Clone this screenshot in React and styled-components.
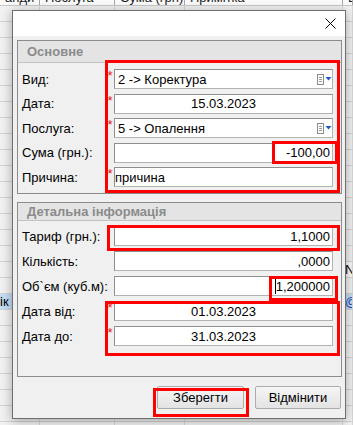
import React from 'react';
import styled, { createGlobalStyle } from 'styled-components';

const Global = createGlobalStyle`
  html, body { margin: 0; padding: 0; }
  body {
    width: 353px; height: 425px; overflow: hidden; background: #ececec;
    font-family: "Liberation Sans", Arial, sans-serif;
  }
  * { box-sizing: border-box; }
`;

const Page = styled.div`
  position: relative;
  width: 353px;
  height: 425px;
  overflow: hidden;
  background: #ececec;
`;

const cols = '40px 75px 70px 158px 1fr';

const Table = styled.div`
  display: flex;
  flex-direction: column;
`;

const HeadRow = styled.div`
  display: grid;
  grid-template-columns: ${cols};
  height: 6px;
  overflow: hidden;
  background: #fbfbfb;
  border-bottom: 1px solid #c9c9c9;
`;

const HeadCell = styled.div`
  display: flex;
  align-items: flex-end;
  padding-left: 5px;
  border-right: 1px solid #a9a9a9;
  font-size: 13px;
  line-height: 13px;
  color: #1e1e1e;
  white-space: nowrap;
  overflow: hidden;
  & > span { margin-bottom: 1px; }
`;

const Row = styled.div`
  display: grid;
  grid-template-columns: ${cols};
  height: 16px;
  border-bottom: 1px solid #d3d3d3;
  background: ${p => (p.$selected ? '#c4def5' : '#f2f2f2')};
`;

const Cell = styled.div`
  border-right: 1px solid #d8d8d8;
  font-size: 13px;
  line-height: 15px;
  padding-left: ${p => p.$pad || 0}px;
  white-space: nowrap;
  overflow: hidden;
  color: ${p => (p.$link ? '#1747b8' : '#000')};
  background: ${p => (p.$boxed ? '#fafafa' : 'transparent')};
`;

const Dialog = styled.div`
  position: absolute;
  left: 12px;
  top: 10px;
  width: 334px;
  height: 409px;
  border: 1px solid #6f6f6f;
  background: #f0f0f0;
  box-shadow: 0 2px 11px rgba(0, 0, 0, 0.32);
  display: flex;
  flex-direction: column;
`;

const TitleBar = styled.div`
  height: 25px;
  background: #ffffff;
  display: flex;
  justify-content: flex-end;
  align-items: center;
  padding-right: 9px;
`;

const Body = styled.div`
  flex: 1;
  display: flex;
  flex-direction: column;
  padding: 4px 3px 4px 4px;
`;

const Group = styled.div`
  width: 325px;
  border: 1px solid #8c8c8c;
  background: #f0f0f0;
  margin-bottom: ${p => p.$mb || 0}px;
`;

const GroupHeader = styled.div`
  height: ${p => p.$h}px;
  background: #e4e4e4;
  border-bottom: 1px solid #c2c2c2;
  display: flex;
  align-items: center;
  padding-left: 9px;
  font-size: 13px;
  font-weight: bold;
  color: #8b8b8b;
`;

const Fields = styled.div`
  display: grid;
  grid-template-columns: 84px 8px 219px;
  grid-auto-rows: 20px;
  row-gap: ${p => p.$gap}px;
  padding: ${p => p.$pt}px 7px ${p => p.$pb}px 4px;
  align-items: center;
`;

const Label = styled.div`
  font-size: 13px;
  color: #000;
  white-space: nowrap;
`;

const Star = styled.div`
  align-self: start;
  font-size: 13px;
  line-height: 13px;
  color: #e8141a;
  text-align: center;
`;

const Input = styled.div`
  height: 20px;
  background: #fff;
  border: 1px solid #b3b3b3;
  border-top-color: #8f8f8f;
  border-left-color: #8f8f8f;
  display: flex;
  align-items: center;
  justify-content: ${p => p.$justify || 'flex-start'};
  padding: 0 ${p => p.$pr ?? 2}px 0 ${p => p.$pl ?? 2}px;
  font-size: 13px;
  color: #000;
  white-space: nowrap;
  overflow: hidden;
`;

const Caret = styled.span`
  display: inline-block;
  width: 1px;
  height: 15px;
  background: #000;
  margin-right: 0;
`;

const Buttons = styled.div`
  display: flex;
  justify-content: flex-end;
  gap: 11px;
  margin-top: 9px;
  padding-right: 1px;
`;

const Button = styled.div`
  width: ${p => p.$w}px;
  height: 23px;
  border: 1px solid #acacac;
  border-radius: 2px;
  background: linear-gradient(#f5f5f5, #e3e3e3);
  display: flex;
  align-items: center;
  justify-content: center;
  font-size: 13px;
  color: #000;
`;

const Mark = styled.div`
  position: absolute;
  left: ${p => p.$x}px;
  top: ${p => p.$y}px;
  width: ${p => p.$w}px;
  height: ${p => p.$h}px;
  border: 3px solid #ff0000;
  pointer-events: none;
`;

const ComboIcon = () => (
  <svg width="16" height="11" viewBox="0 0 16 11">
    <rect x="1.5" y="0.5" width="6" height="10" fill="#fff" stroke="#8c8c8c" />
    <line x1="3" y1="3.5" x2="6" y2="3.5" stroke="#9a9a9a" />
    <line x1="3" y1="5.5" x2="6" y2="5.5" stroke="#9a9a9a" />
    <line x1="3" y1="7.5" x2="6" y2="7.5" stroke="#9a9a9a" />
    <polygon points="9.5,3 15.5,3 12.5,6.5" fill="#1b5cc6" />
  </svg>
);

const CloseIcon = () => (
  <svg width="11" height="11" viewBox="0 0 11 11">
    <line x1="0.5" y1="0.5" x2="10.5" y2="10.5" stroke="#000" strokeWidth="1" />
    <line x1="10.5" y1="0.5" x2="0.5" y2="10.5" stroke="#000" strokeWidth="1" />
  </svg>
);

const main = [
  { label: 'Вид:', req: true, value: '2 -> Коректура', combo: true, pl: 3 },
  { label: 'Дата:', req: true, value: '15.03.2023', justify: 'center' },
  { label: 'Послуга:', req: true, value: '5 -> Опалення', combo: true, pl: 3 },
  { label: 'Сума (грн.):', value: '-100,00', justify: 'flex-end' },
  { label: 'Причина:', req: true, value: 'причина', pl: 0 },
];

const detail = [
  { label: 'Тариф (грн.):', value: '1,1000', justify: 'flex-end' },
  { label: 'Кількість:', value: ',0000', justify: 'flex-end' },
  { label: 'Об`єм (куб.м):', value: '1,200000', justify: 'flex-end', caret: true },
  { label: 'Дата від:', req: true, value: '01.03.2023', justify: 'center' },
  { label: 'Дата до:', req: true, value: '31.03.2023', justify: 'center' },
];

const FieldRows = ({ items }) =>
  items.map(f => (
    <React.Fragment key={f.label}>
      <Label>{f.label}</Label>
      <Star>{f.req ? '*' : ''}</Star>
      <Input
        $justify={f.combo ? 'space-between' : f.justify}
        $pl={f.pl}
        $pr={f.combo ? 0 : 2}
      >
        {f.caret && <Caret />}
        <span>{f.value}</span>
        {f.combo && <ComboIcon />}
      </Input>
    </React.Fragment>
  ));

const rows = Array.from({ length: 27 }, (_, i) => i);

export default function App() {
  return (
    <>
      <Global />
      <Page>
        <Table>
          <HeadRow>
            <HeadCell><span>анди</span></HeadCell>
            <HeadCell><span>Послуга</span></HeadCell>
            <HeadCell><span>Сума (грн)</span></HeadCell>
            <HeadCell><span>Примітка</span></HeadCell>
            <HeadCell><span>Е</span></HeadCell>
          </HeadRow>
          {rows.map(i => (
            <Row key={i} $selected={i === 18}>
              <Cell>{i === 18 ? 'ік' : ''}</Cell>
              <Cell />
              <Cell />
              <Cell />
              <Cell $pad={2} $link={i === 18} $boxed={i === 16}>
                {i === 16 ? 'N' : i === 18 ? '@' : ''}
              </Cell>
            </Row>
          ))}
        </Table>

        <Dialog>
          <TitleBar>
            <CloseIcon />
          </TitleBar>
          <Body>
            <Group $mb={8}>
              <GroupHeader $h={22}>Основне</GroupHeader>
              <Fields $gap={4.5} $pt={6} $pb={6}>
                <FieldRows items={main} />
              </Fields>
            </Group>
            <Group>
              <GroupHeader $h={18}>Детальна інформація</GroupHeader>
              <Fields $gap={5} $pt={5} $pb={30}>
                <FieldRows items={detail} />
              </Fields>
            </Group>
            <Buttons>
              <Button $w={87}>Зберегти</Button>
              <Button $w={86}>Відмінити</Button>
            </Buttons>
          </Body>

          <Mark $x={92} $y={49} $w={235} $h={133} />
          <Mark $x={259} $y={130} $w={66} $h={23} />
          <Mark $x={94} $y={214} $w={233} $h={26} />
          <Mark $x={256} $y={265} $w={69} $h={25} />
          <Mark $x={92} $y={290} $w={235} $h={55} />
          <Mark $x={140} $y={377} $w={96} $h={29} />
        </Dialog>
      </Page>
    </>
  );
}
